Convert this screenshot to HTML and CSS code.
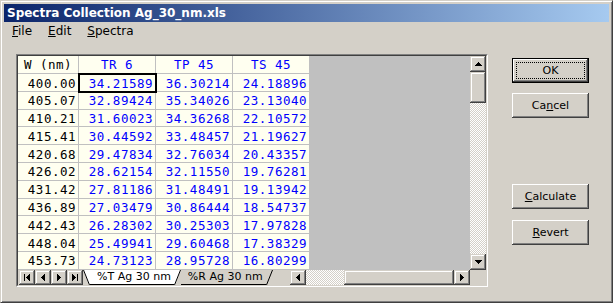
FILE: index.html
```html
<!DOCTYPE html>
<html>
<head>
<meta charset="utf-8">
<link rel="stylesheet" href="styles.css">
</head>
<body>
<div class="window">
  <div class="titlebar">Spectra Collection Ag_30_nm.xls</div>
  <div class="menubar">
    <span class="menu"><u>F</u>ile</span>
    <span class="menu"><u>E</u>dit</span>
    <span class="menu"><u>S</u>pectra</span>
  </div>
  <div class="content">
    <div class="gridframe">
      <div class="gridinner">
        <div class="gridmain">
          <div class="sheet">
            <div class="cell hd black">W (nm)</div>
            <div class="cell hd">TR 6</div>
            <div class="cell hd">TP 45</div>
            <div class="cell hd">TS 45</div>

            <div class="cell w">400.00</div><div class="cell v sel">34.21589</div><div class="cell v">36.30214</div><div class="cell v">24.18896</div>
            <div class="cell w">405.07</div><div class="cell v">32.89424</div><div class="cell v">35.34026</div><div class="cell v">23.13040</div>
            <div class="cell w">410.21</div><div class="cell v">31.60023</div><div class="cell v">34.36268</div><div class="cell v">22.10572</div>
            <div class="cell w">415.41</div><div class="cell v">30.44592</div><div class="cell v">33.48457</div><div class="cell v">21.19627</div>
            <div class="cell w">420.68</div><div class="cell v">29.47834</div><div class="cell v">32.76034</div><div class="cell v">20.43357</div>
            <div class="cell w">426.02</div><div class="cell v">28.62154</div><div class="cell v">32.11550</div><div class="cell v">19.76281</div>
            <div class="cell w">431.42</div><div class="cell v">27.81186</div><div class="cell v">31.48491</div><div class="cell v">19.13942</div>
            <div class="cell w">436.89</div><div class="cell v">27.03479</div><div class="cell v">30.86444</div><div class="cell v">18.54737</div>
            <div class="cell w">442.43</div><div class="cell v">26.28302</div><div class="cell v">30.25303</div><div class="cell v">17.97828</div>
            <div class="cell w">448.04</div><div class="cell v">25.49941</div><div class="cell v">29.60468</div><div class="cell v">17.38329</div>
            <div class="cell w">453.73</div><div class="cell v">24.73123</div><div class="cell v">28.95728</div><div class="cell v">16.80299</div>
          </div>
          <div class="vscroll">
            <div class="sbtn"><svg width="7" height="4" shape-rendering="crispEdges"><path d="M3 0h1v1h-1z M2 1h3v1h-3z M1 2h5v1h-5z M0 3h7v1h-7z" fill="#000"/></svg></div>
            <div class="vthumb"></div>
            <div class="track"></div>
            <div class="sbtn"><svg width="7" height="4" shape-rendering="crispEdges"><path d="M0 0h7v1h-7z M1 1h5v1h-5z M2 2h3v1h-3z M3 3h1v1h-1z" fill="#000"/></svg></div>
          </div>
        </div>
        <div class="gridbottom">
          <div class="tabnav">
            <div class="nbtn"><svg width="6" height="7" shape-rendering="crispEdges"><path d="M0 0h1v7h-1z M5 0h1v7h-1z M4 1h1v5h-1z M3 2h1v3h-1z M2 3h1v1h-1z" fill="#000"/></svg></div>
            <div class="nbtn"><svg width="4" height="7" shape-rendering="crispEdges"><path d="M3 0h1v7h-1z M2 1h1v5h-1z M1 2h1v3h-1z M0 3h1v1h-1z" fill="#000"/></svg></div>
            <div class="nbtn"><svg width="4" height="7" shape-rendering="crispEdges"><path d="M0 0h1v7h-1z M1 1h1v5h-1z M2 2h1v3h-1z M3 3h1v1h-1z" fill="#000"/></svg></div>
            <div class="nbtn"><svg width="6" height="7" shape-rendering="crispEdges"><path d="M0 0h1v7h-1z M1 1h1v5h-1z M2 2h1v3h-1z M3 3h1v1h-1z M5 0h1v7h-1z" fill="#000"/></svg></div>
          </div>
          <div class="tabs">
            <svg class="slant" width="7" height="15"><polygon points="0,0 7,0 7,15 6,15" fill="#fff"/><line x1="0.5" y1="0" x2="6.5" y2="15" stroke="#000" stroke-width="1"/></svg>
            <span class="tab active">%T Ag 30 nm</span>
            <svg class="slant" width="7" height="15"><polygon points="0,0 7,0 1,15 0,15" fill="#fff"/><line x1="6.5" y1="0" x2="0.5" y2="15" stroke="#000" stroke-width="1"/></svg>
            <span class="tab">%R Ag 30 nm</span>
            <svg class="slant" width="7" height="15"><line x1="6.5" y1="0" x2="0.5" y2="15" stroke="#000" stroke-width="1"/></svg>
            <span class="tabrest"></span>
          </div>
          <div class="hscroll">
            <div class="sbtn"><svg width="4" height="7" shape-rendering="crispEdges"><path d="M3 0h1v7h-1z M2 1h1v5h-1z M1 2h1v3h-1z M0 3h1v1h-1z" fill="#000"/></svg></div>
            <div class="htrack"></div>
            <div class="hthumb"></div>
            <div class="sbtn"><svg width="4" height="7" shape-rendering="crispEdges"><path d="M0 0h1v7h-1z M1 1h1v5h-1z M2 2h1v3h-1z M3 3h1v1h-1z" fill="#000"/></svg></div>
          </div>
          <div class="corner"></div>
        </div>
      </div>
    </div>
    <div class="buttons">
      <div class="btn default"><span class="focus">OK</span></div>
      <div class="btn cancel"><span>Ca<u>n</u>cel</span></div>
      <div class="btn calc"><span><u>C</u>alculate</span></div>
      <div class="btn revert"><span><u>R</u>evert</span></div>
    </div>
  </div>
</div>
</body>
</html>
```

FILE: styles.css
```css
html, body {
  margin: 0;
  padding: 0;
  background: #d4d0c8;
}

.window {
  width: 613px;
  height: 303px;
  box-sizing: border-box;
  background: #d4d0c8;
  border: 1px solid;
  border-color: #d4d0c8 #404040 #404040 #d4d0c8;
  box-shadow: inset 1px 1px #ffffff, inset -1px -1px #808080;
  padding: 3px;
  display: flex;
  flex-direction: column;
  font-family: "DejaVu Sans", sans-serif;
}

.titlebar {
  height: 18px;
  line-height: 19px;
  background: linear-gradient(to right, #0a246a, #a6caf0);
  color: #fff;
  font-weight: bold;
  font-size: 12px;
  padding-left: 3px;
  white-space: nowrap;
  overflow: hidden;
}

.menubar {
  height: 18px;
  box-sizing: border-box;
  padding: 1px 0 0 8px;
  display: flex;
  gap: 16px;
  font-size: 12px;
  line-height: 17px;
  color: #000;
}

.content {
  display: flex;
  padding: 14px 0 0 12px;
}

.gridframe {
  width: 472px;
  height: 233px;
  box-sizing: border-box;
  border: 1px solid;
  border-color: #808080 #ffffff #ffffff #808080;
}

.gridinner {
  height: 100%;
  box-sizing: border-box;
  border: 1px solid;
  border-color: #404040 #d4d0c8 #d4d0c8 #404040;
  display: flex;
  flex-direction: column;
}

.gridmain {
  display: flex;
  height: 214px;
}

.sheet {
  flex: 1;
  background: #c0c0c0;
  overflow: hidden;
  display: grid;
  grid-template-columns: 61px 77px 77px 77px;
  grid-template-rows: 18px repeat(11, 17.8px);
  align-content: start;
}

.cell {
  background: #fffff0;
  border-right: 1px solid #c0c0c0;
  border-bottom: 1px solid #c0c0c0;
  box-sizing: border-box;
  font-family: "DejaVu Sans Mono", monospace;
  font-size: 12.5px;
  letter-spacing: 0.5px;
  line-height: 14.5px;
  padding-top: 2.5px;
  color: #0000ff;
  white-space: nowrap;
}

.hd {
  text-align: center;
  padding-top: 2px;
}

.black, .w {
  color: #000;
}

.w, .v {
  text-align: right;
  padding-right: 2px;
}

.sel {
  position: relative;
  z-index: 1;
  outline: 2px solid #000;
  outline-offset: -1px;
}

.vscroll {
  width: 16px;
  display: flex;
  flex-direction: column;
}

.sbtn, .vthumb, .hthumb, .nbtn {
  background: #d4d0c8;
  box-shadow: inset -1px -1px #404040, inset 1px 1px #d4d0c8, inset -2px -2px #808080, inset 2px 2px #ffffff;
  box-sizing: border-box;
}

.sbtn {
  width: 16px;
  height: 16px;
  display: flex;
  align-items: center;
  justify-content: center;
}

.vthumb {
  height: 31px;
}

.track, .htrack {
  flex: 1;
  background-color: #d4d0c8;
  background-image: conic-gradient(#ffffff 25%, #d4d0c8 0 50%, #ffffff 0 75%, #d4d0c8 0);
  background-size: 2px 2px;
}

.gridbottom {
  display: flex;
  height: 15px;
}

.tabnav {
  display: flex;
  padding-left: 1px;
}

.nbtn {
  width: 16px;
  height: 15px;
  display: flex;
  align-items: center;
  justify-content: center;
}

.tabs {
  flex: 1;
  display: flex;
  align-items: stretch;
  overflow: hidden;
  font-family: "DejaVu Sans", sans-serif;
  font-size: 11px;
  line-height: 14px;
  color: #000;
}

.slant {
  flex: none;
  display: block;
}

.tab {
  padding: 0 3px 0 7px;
  white-space: nowrap;
  border-bottom: 1px solid #000;
  box-sizing: border-box;
}

.tab.active {
  background: #fff;
}

.tabrest {
  flex: 1;
}

.hscroll {
  display: flex;
  width: 180px;
}

.hscroll .sbtn {
  height: 15px;
}

.htrack {
  flex: none;
  width: 38px;
}

.hthumb {
  width: 110px;
}

.corner {
  width: 16px;
  background: #d4d0c8;
}

.buttons {
  display: flex;
  flex-direction: column;
  margin-left: 24px;
  padding-top: 4px;
}

.btn {
  width: 77px;
  height: 25px;
  box-sizing: border-box;
  background: #d4d0c8;
  box-shadow: inset -1px -1px #404040, inset 1px 1px #ffffff, inset -2px -2px #808080, inset 2px 2px #d4d0c8;
  display: flex;
  align-items: center;
  justify-content: center;
  font-size: 11px;
  color: #000;
}

.btn.default {
  border: 1px solid #000;
  align-items: stretch;
  justify-content: stretch;
}

.focus {
  flex: 1;
  margin: 3px;
  border: 1px dotted #000;
  display: flex;
  align-items: center;
  justify-content: center;
}

.cancel {
  margin-top: 10px;
}

.calc {
  margin-top: 66px;
}

.revert {
  margin-top: 11px;
}
```
